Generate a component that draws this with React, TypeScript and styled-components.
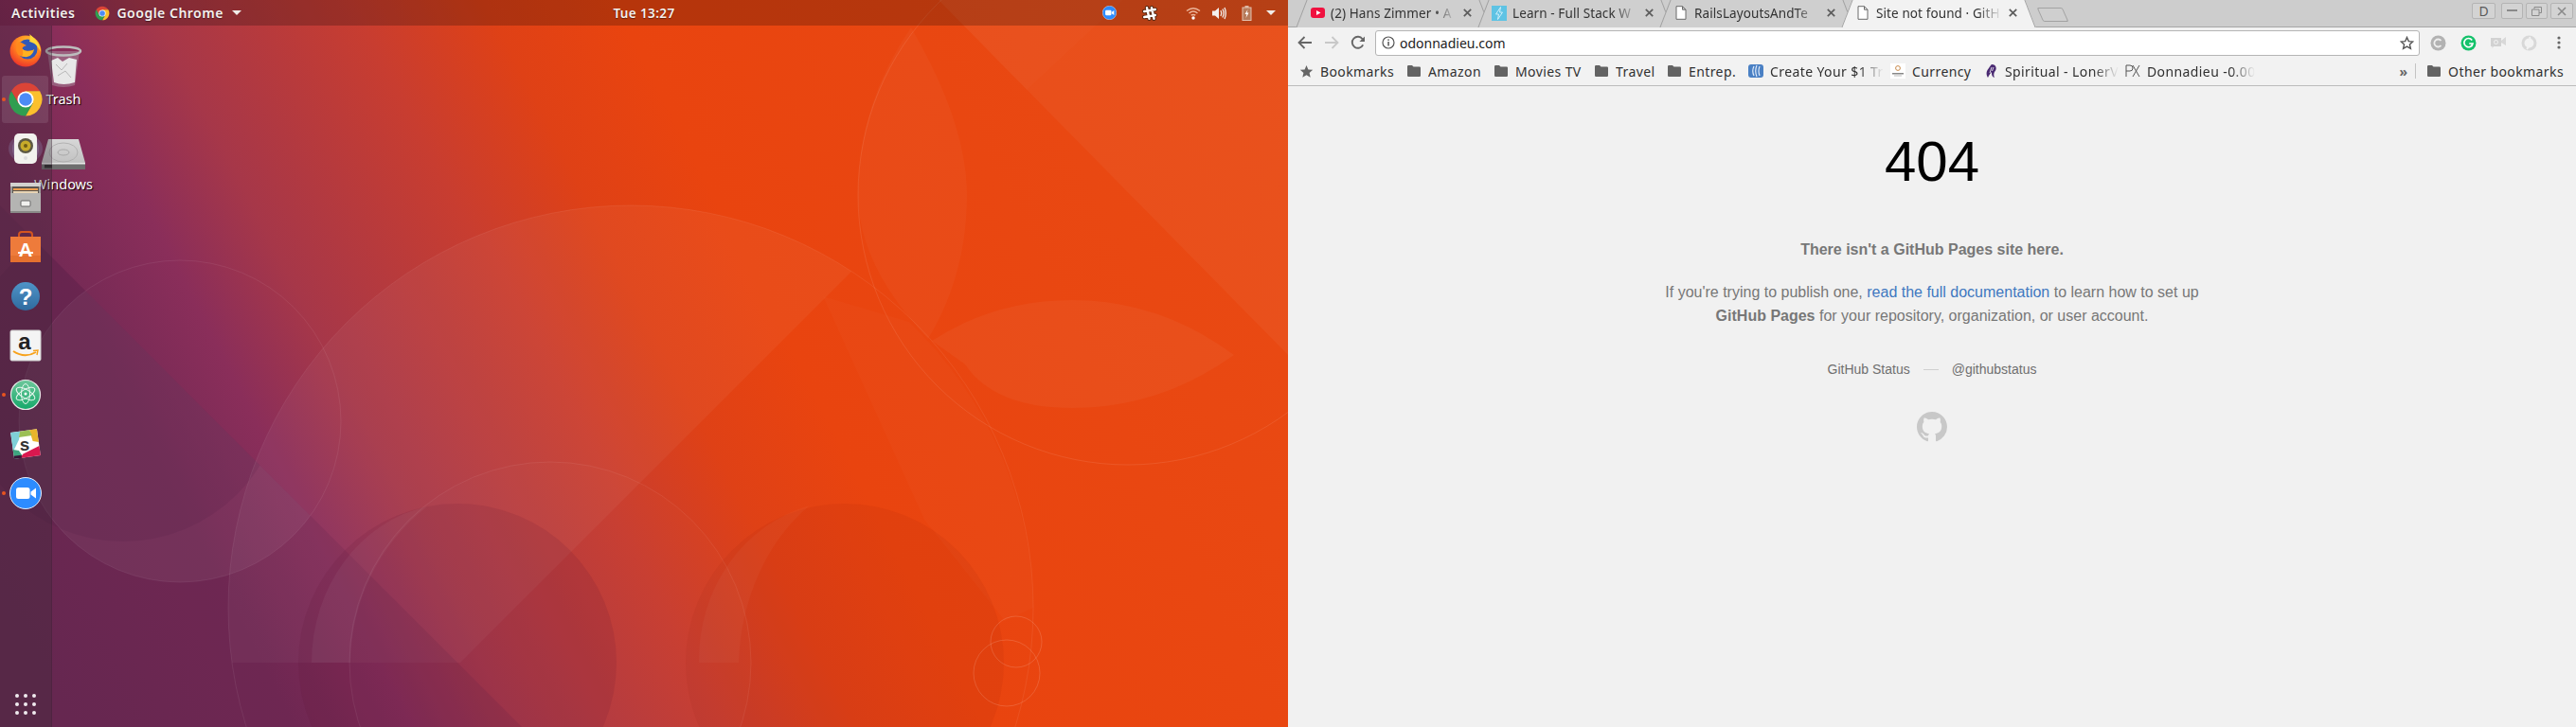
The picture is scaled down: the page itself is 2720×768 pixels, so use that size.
import React from "react";
import styled, { createGlobalStyle } from "styled-components";

const Global = createGlobalStyle`
  html, body { margin: 0; padding: 0; width: 2720px; height: 768px; overflow: hidden; background: #f1f1f1; }
  * { box-sizing: border-box; }
`;

const UI = `"Noto Sans", "Open Sans", sans-serif`;
const WEB = `"Liberation Sans", Arial, sans-serif`;
const FADE = `linear-gradient(90deg, #000 calc(100% - 26px), transparent 100%)`;

const Screen = styled.div`
  display: grid;
  grid-template-columns: 1360px 1360px;
  width: 2720px;
  height: 768px;
  overflow: hidden;
`;

/* ---------- desktop ---------- */
const Desktop = styled.section`
  position: relative;
  display: flex;
  flex-direction: column;
  height: 768px;
  overflow: hidden;
  background: #e9440f;
`;
const WallpaperSvg = styled.svg`
  position: absolute;
  inset: 0;
`;
const TopBar = styled.header`
  position: relative;
  display: grid;
  grid-template-columns: 1fr auto 1fr;
  align-items: center;
  height: 27px;
  flex: none;
  background: rgba(0, 0, 0, 0.22);
  color: #f4f0ee;
  font: 600 14px ${UI};
  letter-spacing: 0.5px;
  text-shadow: 0 1px 1px rgba(0, 0, 0, 0.45);
`;
const BarLeft = styled.div`
  display: flex;
  align-items: center;
  padding-left: 12px;
`;
const AppMenu = styled.div`
  display: flex;
  align-items: center;
  gap: 7px;
  margin-left: 21px;
`;
const Caret = styled.span`
  width: 0;
  height: 0;
  margin-left: 2px;
  border-left: 5px solid transparent;
  border-right: 5px solid transparent;
  border-top: 5px solid #f0ece8;
`;
const Clock = styled.div`
  font-size: 13.5px;
  letter-spacing: 0.4px;
`;
const Tray = styled.div`
  display: flex;
  align-items: center;
  justify-content: flex-end;
  padding-right: 14px;
`;
const TraySlot = styled.span<{ $w: number }>`
  display: flex;
  justify-content: center;
  align-items: center;
  width: ${(p) => p.$w}px;
`;
const Body = styled.div`
  position: relative;
  flex: 1;
  display: flex;
`;
const Dock = styled.nav`
  position: relative;
  z-index: 2;
  width: 55px;
  display: flex;
  flex-direction: column;
  background: rgba(52, 44, 52, 0.3);
  border-right: 1px solid rgba(60, 30, 50, 0.28);
`;
const DockSlot = styled.div<{ $active?: boolean; $running?: boolean }>`
  position: relative;
  display: flex;
  align-items: center;
  justify-content: center;
  height: 52px;
  flex: none;
  &::before {
    content: "";
    position: absolute;
    display: ${(p) => (p.$active ? "block" : "none")};
    left: 2px;
    right: 3px;
    top: 1px;
    bottom: 1px;
    border-radius: 3px;
    background: rgba(255, 255, 255, 0.1);
  }
  &::after {
    content: "";
    position: absolute;
    display: ${(p) => (p.$running ? "block" : "none")};
    left: 2px;
    top: 24px;
    width: 4px;
    height: 4px;
    border-radius: 50%;
    background: #e9541f;
  }
  svg { position: relative; }
`;
const AppGrid = styled.div`
  margin: auto 0 13px 16px;
  display: grid;
  grid-template-columns: repeat(3, 4px);
  gap: 5px;
`;
const AppDot = styled.i`
  width: 4px;
  height: 4px;
  border-radius: 50%;
  background: #f0eaee;
`;
const DesktopItem = styled.div<{ $top: number; $gap: number }>`
  position: absolute;
  left: 27px;
  top: ${(p) => p.$top}px;
  width: 80px;
  display: flex;
  flex-direction: column;
  align-items: center;
  gap: ${(p) => p.$gap}px;
  color: #fff;
  font: 400 14.5px ${UI};
  text-shadow: 1px 1px 1px #000;
  line-height: 19px;
  z-index: 1;
`;

/* ---------- browser ---------- */
const Browser = styled.section`
  display: flex;
  flex-direction: column;
  height: 768px;
  background: #f1f1f1;
  font: 400 14px ${UI};
  color: #2e2e2e;
`;
const TabStrip = styled.div`
  display: flex;
  height: 29px;
  flex: none;
  padding-left: 9px;
  background: #cdcdcd;
  border-bottom: 1px solid #a6a6a6;
`;
const Tab = styled.div<{ $active?: boolean }>`
  position: relative;
  isolation: isolate;
  display: flex;
  align-items: center;
  width: 205px;
  height: 29px;
  margin-right: -13px;
  padding: 0 18px 2px 14px;
  z-index: ${(p) => (p.$active ? 3 : 1)};
  &::before, &::after {
    content: "";
    position: absolute;
    top: 0;
    bottom: 0;
    width: 55%;
    z-index: -1;
    background: ${(p) => (p.$active ? "#f2f2f2" : "#cfcfcf")};
  }
  &::before {
    left: 5px;
    transform: skewX(-21deg);
    border-left: 1px solid #a0a0a0;
  }
  &::after {
    right: 6px;
    transform: skewX(21deg);
    border-right: 1px solid #a0a0a0;
  }
`;
const TabIcon = styled.span`
  display: flex;
  justify-content: center;
  width: 16px;
  flex: none;
  margin-right: 6px;
`;
const TabTitle = styled.span`
  flex: 1;
  overflow: hidden;
  white-space: nowrap;
  font-size: 13.5px;
  letter-spacing: 0.1px;
  -webkit-mask-image: ${FADE};
  mask-image: ${FADE};
  color: #333;
`;
const CloseMark = styled.span`
  display: flex;
  justify-content: center;
  width: 14px;
  flex: none;
  margin-left: 4px;
`;
const NewTab = styled.div`
  width: 27px;
  height: 15px;
  flex: none;
  margin: 8px 0 0 17px;
  transform: skewX(24deg);
  border: 1px solid #a2a2a2;
  border-radius: 2px;
  background: #cfcfcf;
`;
const WindowControls = styled.div`
  display: flex;
  align-items: flex-start;
  gap: 3px;
  margin-left: auto;
  padding: 3px 3px 0 0;
`;
const WinButton = styled.div<{ $w: number; $gap?: number }>`
  display: flex;
  align-items: center;
  justify-content: center;
  width: ${(p) => p.$w}px;
  height: 17px;
  margin-right: ${(p) => p.$gap ?? 0}px;
  border: 1px solid #b4b4b4;
  border-radius: 2px;
  background: #d3d3d3;
  color: #5a5a5a;
  font: 400 14px ${UI};
  line-height: 14px;
`;
const Toolbar = styled.div`
  display: flex;
  align-items: center;
  height: 32px;
  flex: none;
  padding: 0 2px 0 4px;
  background: #f2f2f2;
`;
const ToolButton = styled.span`
  display: flex;
  align-items: center;
  justify-content: center;
  width: 28px;
  height: 28px;
  flex: none;
`;
const Omnibox = styled.div`
  flex: 1;
  display: flex;
  align-items: center;
  height: 27px;
  margin: 0 3px 0 4px;
  padding: 0 5px 0 6px;
  background: #fff;
  border: 1px solid #b5b5b5;
  border-radius: 3px;
  font-size: 14px;
  color: #222;
`;
const Url = styled.span`
  flex: 1;
  margin-left: 5px;
`;
const ExtButton = styled.span`
  display: flex;
  align-items: center;
  justify-content: center;
  width: 32px;
  flex: none;
`;
const Bookmarks = styled.div`
  display: flex;
  align-items: center;
  height: 30px;
  flex: none;
  padding: 0 13px 1px 11px;
  background: #f2f2f2;
  border-bottom: 1px solid #bcbcbc;
  color: #303030;
`;
const Bookmark = styled.div<{ $w?: number }>`
  display: flex;
  align-items: center;
  width: ${(p) => (p.$w ? `${p.$w}px` : "auto")};
  flex: none;
  white-space: nowrap;
  overflow: hidden;
`;
const BookmarkIcon = styled.span`
  display: flex;
  justify-content: center;
  width: 16px;
  flex: none;
  margin-right: 7px;
`;
const BookmarkText = styled.span<{ $fade?: boolean }>`
  overflow: hidden;
  letter-spacing: 0.4px;
  ${(p) =>
    p.$fade
      ? `-webkit-mask-image: ${FADE};
         mask-image: ${FADE};`
      : ""}
`;
const Spacer = styled.div`
  flex: 1;
`;
const Chevron = styled.span`
  color: #666;
  font-size: 14px;
  font-weight: 700;
  margin-right: 8px;
`;
const Separator = styled.span`
  width: 1px;
  height: 16px;
  background: #c4c4c4;
  margin-right: 11px;
`;

/* ---------- 404 page ---------- */
const Page = styled.main`
  flex: 1;
  display: flex;
  flex-direction: column;
  align-items: center;
  background: #f1f1f1;
  font-family: ${WEB};
  color: #777;
  font-size: 16px;
`;
const BigCode = styled.h1`
  margin: 45px 0 0;
  height: 70px;
  font: 400 60px/70px ${WEB};
  color: #000;
`;
const Lead = styled.p`
  margin: 48px 0 0;
  font-weight: 700;
  line-height: 20px;
`;
const Copy = styled.p`
  margin: 22px 0 0;
  line-height: 25px;
  text-align: center;
`;
const DocLink = styled.a`
  color: #4078c0;
  text-decoration: none;
`;
const Strong = styled.strong`
  font-weight: 700;
`;
const FooterLinks = styled.div`
  display: flex;
  align-items: center;
  margin-top: 34px;
  font-size: 14px;
  line-height: 20px;
  color: #6f6f6f;
`;
const Dash = styled.span`
  width: 16px;
  height: 1px;
  margin: 0 14px;
  background: #cfcfcf;
`;
const Octo = styled.svg`
  margin-top: 35px;
`;

/* ---------- drawings ---------- */
const Wallpaper = () => (
  <WallpaperSvg width="1360" height="768" viewBox="0 0 1360 768">
    <defs>
      <linearGradient id="wall" gradientUnits="userSpaceOnUse" x1="-267" y1="137" x2="1077" y2="-552">
        <stop offset="0" stopColor="#6b2a53" />
        <stop offset="0.15" stopColor="#752a55" />
        <stop offset="0.223" stopColor="#8a2e5a" />
        <stop offset="0.29" stopColor="#a63749" />
        <stop offset="0.417" stopColor="#c83d30" />
        <stop offset="0.5" stopColor="#df4116" />
        <stop offset="0.58" stopColor="#e9440f" />
        <stop offset="1" stopColor="#e94b14" />
      </linearGradient>
      <clipPath id="bigTop"><rect x="0" y="0" width="1360" height="700" /></clipPath>
      <clipPath id="leftOfDiag"><polygon points="0,0 1186,0 418,768 0,768" /></clipPath>
      <clipPath id="belowLeft"><polygon points="0,217 551,768 0,768" /></clipPath>
    </defs>
    <rect width="1360" height="768" fill="url(#wall)" />
    {/* large top-right shapes */}
    <polygon points="991,0 1360,0 1360,375" fill="#fff" opacity="0.04" />
    <polygon points="991,0 1186,0 1084,95" fill="#fff" opacity="0.015" />
    <path d="M962 29 Q1021 130 1021 206 Q1021 290 980 358 Q906 280 906 206 Q906 110 962 29 Z" fill="#fff" opacity="0.03" />
    <path d="M984 360 Q1050 317 1132 317 Q1225 317 1303 375 Q1225 431 1132 431 Q1050 431 1019 385 Z" fill="#fff" opacity="0.04" />
    {/* big circle */}
    <g clipPath="url(#bigTop)">
      <g clipPath="url(#leftOfDiag)">
        <circle cx="666" cy="642" r="425" fill="#fff" opacity="0.045" />
      </g>
      <path d="M869 313 L976 549 L1061 656 L1091 642 A425 425 0 0 0 960 340 Z" fill="#fff" opacity="0.02" />
    </g>
    <polygon points="0,217 551,768 0,768" fill="#451a40" opacity="0.12" />
    {/* left circle crescent */}
    <g clipPath="url(#belowLeft)">
      <circle cx="190" cy="445" r="170" fill="#fff" opacity="0.05" />
      <circle cx="130" cy="402" r="170" fill="#3d1838" opacity="0.1" />
    </g>
    {/* bottom arches */}
    <circle cx="483" cy="700" r="168" fill="#5a1030" opacity="0.12" />
    <path d="M329 700 A152 168 0 0 1 451 535 A212 212 0 0 0 370 700 Z" fill="#fff" opacity="0.045" />
    <circle cx="892" cy="700" r="168" fill="#8a1a08" opacity="0.08" />
    <path d="M738 700 A155 168 0 0 1 855 534 A170 210 0 0 0 780 700 Z" fill="#fff" opacity="0.03" />
    <circle cx="581" cy="700" r="212" fill="#fff" opacity="0.01" />
    {/* hairlines */}
    <g fill="none" stroke="#fff" strokeOpacity="0.07" strokeWidth="1">
      <circle cx="666" cy="642" r="425" />
      <circle cx="1191" cy="206" r="285" strokeOpacity="0.09" />
      <circle cx="190" cy="445" r="170" />
      <circle cx="581" cy="700" r="212" />
      <circle cx="1073" cy="678" r="27" strokeOpacity="0.14" />
      <circle cx="1063" cy="711" r="35" strokeOpacity="0.14" />
    </g>
  </WallpaperSvg>
);

const ChromeIcon = ({ size }: { size: number }) => (
  <svg width={size} height={size} viewBox="0 0 24 24">
    <path d="M12 6.5H21.53A11 11 0 0 0 2.47 6.5L7.24 14.75 12 12Z" fill="#db4437" />
    <path d="M12 6.5H21.53A11 11 0 0 0 2.47 6.5L7.24 14.75 12 12Z" fill="#fbc02d" transform="rotate(120 12 12)" />
    <path d="M12 6.5H21.53A11 11 0 0 0 2.47 6.5L7.24 14.75 12 12Z" fill="#2f9e50" transform="rotate(240 12 12)" />
    <circle cx="12" cy="12" r="5.4" fill="#fff" />
    <circle cx="12" cy="12" r="4.3" fill="#4c8bf5" />
  </svg>
);

const FirefoxIcon = () => (
  <svg width="34" height="36" viewBox="0 0 34 36">
    <defs>
      <radialGradient id="ffa" cx="0.6" cy="0.25" r="0.85">
        <stop offset="0" stopColor="#ffcb2f" />
        <stop offset="0.55" stopColor="#ff7a1f" />
        <stop offset="1" stopColor="#e8232e" />
      </radialGradient>
    </defs>
    <circle cx="17" cy="19" r="16.5" fill="url(#ffa)" />
    <circle cx="19" cy="17" r="10.5" fill="#2f59b8" />
    <path d="M21 1 C28 6 33 12 33 20 C30 13 26 10 21 9 C22 6 22 3 21 1Z" fill="#ffd83a" />
    <path d="M10 9 C14 10 15 12 18 13 C15 14 13 15 14 17 C16 19 20 19 24 18 C23 23 17 27 11 24 C6 21 6 13 10 9Z" fill="#ff8a1c" />
    <path d="M14 17 C17 20 22 20 26 17 C25 24 18 27 13 24 C15 23 14 20 14 17Z" fill="#ffb21f" />
  </svg>
);

const SpeakerIcon = () => (
  <svg width="38" height="36" viewBox="0 0 38 36">
    <ellipse cx="19" cy="18" rx="18" ry="15" fill="#9fb6e8" opacity="0.2" />
    <ellipse cx="19" cy="18" rx="14" ry="15" fill="#b9c9ee" opacity="0.22" />
    <rect x="7" y="2" width="24" height="32" rx="5" fill="#f2f2ee" />
    <circle cx="19" cy="15" r="8" fill="#5c5844" />
    <circle cx="19" cy="15" r="5.5" fill="#c7ab2a" />
    <circle cx="19" cy="15" r="2" fill="#6e5c14" />
    <circle cx="19" cy="28" r="2" fill="#ddd" />
  </svg>
);

const FilesIcon = () => (
  <svg width="34" height="34" viewBox="0 0 34 34">
    <rect x="1" y="1" width="32" height="32" rx="2" fill="#9c9c9a" />
    <rect x="1" y="1" width="32" height="4" fill="#d2d2d0" />
    <rect x="3" y="5" width="28" height="7" fill="#5a5550" />
    <rect x="4" y="7" width="26" height="2" fill="#f0a050" />
    <rect x="4" y="10" width="26" height="2" fill="#e8d4b4" />
    <rect x="1" y="12" width="32" height="21" fill="#b4b4b2" />
    <rect x="1" y="31" width="32" height="2" fill="#8a8a88" />
    <rect x="12" y="20" width="10" height="6" rx="1" fill="#f0f0ee" stroke="#666" strokeWidth="1" />
  </svg>
);

const SoftwareIcon = () => (
  <svg width="34" height="36" viewBox="0 0 34 36">
    <path d="M10 9 V5 Q10 2 13 2 H21 Q24 2 24 5 V9" fill="none" stroke="#d4551f" strokeWidth="2" />
    <rect x="1" y="7" width="32" height="27" fill="#ee7b3b" />
    <rect x="1" y="27" width="32" height="7" fill="#e5712f" />
    <rect x="9" y="23" width="16" height="2" fill="#fff" />
    <text x="17" y="28" textAnchor="middle" fontFamily={WEB} fontWeight="700" fontSize="20" fill="#fff">A</text>
  </svg>
);

const HelpIcon = () => (
  <svg width="34" height="34" viewBox="0 0 34 34">
    <defs>
      <linearGradient id="hlp" x1="0" y1="0" x2="0" y2="1">
        <stop offset="0" stopColor="#4f94c8" />
        <stop offset="1" stopColor="#2f6a9e" />
      </linearGradient>
    </defs>
    <circle cx="17" cy="17" r="15" fill="url(#hlp)" />
    <text x="17" y="26" textAnchor="middle" fontFamily={WEB} fontWeight="700" fontSize="24" fill="#fff">?</text>
  </svg>
);

const AmazonIcon = () => (
  <svg width="34" height="34" viewBox="0 0 34 34">
    <rect x="1" y="1" width="32" height="32" rx="1.5" fill="#f4f4f4" stroke="#ccc" />
    <text x="16" y="21" textAnchor="middle" fontFamily={WEB} fontWeight="700" fontSize="24" fill="#222">a</text>
    <path d="M4 23 Q16 31 28 24" fill="none" stroke="#f7a21b" strokeWidth="2" />
    <path d="M25 22.5 L30 22 L29 27" fill="none" stroke="#f7a21b" strokeWidth="1.4" />
  </svg>
);

const AtomIcon = () => (
  <svg width="34" height="34" viewBox="0 0 34 34">
    <defs>
      <linearGradient id="atm" x1="0" y1="0" x2="0" y2="1">
        <stop offset="0" stopColor="#6ec79b" />
        <stop offset="1" stopColor="#14a86a" />
      </linearGradient>
    </defs>
    <circle cx="17" cy="17" r="15.5" fill="url(#atm)" stroke="#e8e8e8" strokeWidth="1.2" />
    <g fill="none" stroke="#e9f7ef" strokeWidth="1">
      <ellipse cx="17" cy="16" rx="11" ry="4.5" transform="rotate(30 17 16)" />
      <ellipse cx="17" cy="16" rx="11" ry="4.5" transform="rotate(-30 17 16)" />
      <ellipse cx="17" cy="16" rx="4.5" ry="10.5" />
    </g>
    <circle cx="17" cy="16" r="1.5" fill="#fff" />
  </svg>
);

const SlackIcon = () => (
  <svg width="32" height="32" viewBox="0 0 32 32">
    <g transform="rotate(-8 16 16)">
      <rect x="2" y="2" width="28" height="28" fill="#fff" />
      <polygon points="2,2 12,2 10,10 2,22" fill="#7fcfd8" />
      <polygon points="22,2 30,2 30,16 24,14" fill="#e9b52c" />
      <polygon points="12,2 22,2 24,8 10,8" fill="#9bbf55" />
      <polygon points="2,20 8,22 12,30 2,30" fill="#3ea57f" />
      <polygon points="12,26 30,20 30,30 8,30" fill="#d9184f" />
      <polygon points="2,27 10,27 10,30 2,30" fill="#3a1638" />
    </g>
    <text x="15" y="23" textAnchor="middle" fontFamily={WEB} fontWeight="700" fontSize="19" fill="#333">s</text>
  </svg>
);

const ZoomIcon = ({ size }: { size: number }) => (
  <svg width={size} height={size} viewBox="0 0 34 34">
    <circle cx="17" cy="17" r="16.5" fill="#2d8cff" stroke="#e8eef8" strokeWidth="1" />
    <rect x="7" y="11" width="14.5" height="12" rx="2.5" fill="#fff" />
    <path d="M22.5 15.5 L28 11.5 V22.5 L22.5 18.5Z" fill="#fff" />
  </svg>
);

const TrashIcon = () => (
  <svg width="40" height="46" viewBox="0 0 40 46">
    <path d="M3 6 L8 42 Q20 46 32 42 L37 6Z" fill="#b9b4ba" fillOpacity="0.38" />
    <ellipse cx="20" cy="6" rx="18" ry="4.5" fill="none" stroke="#bdbdbd" strokeWidth="2.5" />
    <path d="M7 16 L14 13 L19 17 L26 13 L34 15 L33 26 L32 39 Q20 43 10 39 Z" fill="#e8e8e8" />
    <path d="M12 20 L18 26 L24 19 M14 32 L22 27 L28 34" fill="none" stroke="#b8b8b8" strokeWidth="1" />
  </svg>
);

const DiskIcon = () => (
  <svg width="48" height="36" viewBox="0 0 48 36">
    <defs>
      <linearGradient id="dsk" x1="0" y1="0" x2="0" y2="1">
        <stop offset="0" stopColor="#d7d7d7" />
        <stop offset="1" stopColor="#c2c2c2" />
      </linearGradient>
    </defs>
    <path d="M8 1 H40 L47 26 H1 Z" fill="url(#dsk)" />
    <rect x="1" y="26" width="46" height="7" fill="#6e6e6e" />
    <rect x="1" y="26" width="46" height="1.5" fill="#e8e8e8" />
    <rect x="4" y="28" width="8" height="3.5" fill="#2c2c2c" />
    <ellipse cx="24" cy="15" rx="15" ry="10" fill="none" stroke="#aaa" strokeWidth="0.8" />
    <ellipse cx="24" cy="15" rx="6" ry="3" fill="none" stroke="#a0a0a0" strokeWidth="0.8" />
  </svg>
);

const TraySlack = () => (
  <svg width="16" height="16" viewBox="0 0 16 16">
    <g stroke="#3a2210" strokeWidth="4.4" strokeLinecap="round" opacity="0.75">
      <path d="M5 2.2 L7.5 13.8 M10 2.2 L12.5 13.8 M2.2 6 L13.8 4 M2.2 12 L13.8 10" />
    </g>
    <g stroke="#fff" strokeWidth="2.4" strokeLinecap="round">
      <path d="M5 2.2 L7.5 13.8 M10 2.2 L12.5 13.8 M2.2 6 L13.8 4 M2.2 12 L13.8 10" />
    </g>
  </svg>
);

const Wifi = () => (
  <svg width="16" height="14" viewBox="0 0 16 14">
    <g fill="none" stroke="#ecb59a" strokeWidth="1.5">
      <path d="M1 4.5 Q8 -1 15 4.5" />
      <path d="M3.5 7 Q8 3 12.5 7" />
      <path d="M5.7 9.2 Q8 7.6 10.3 9.2" />
    </g>
    <circle cx="8" cy="12" r="1.7" fill="#fff" />
  </svg>
);

const Volume = () => (
  <svg width="16" height="16" viewBox="0 0 16 16">
    <path d="M1 5.5 H4 L8 2 V14 L4 10.5 H1 Z" fill="#f4f0ee" />
    <g fill="none" stroke="#f4f0ee" strokeWidth="1.3">
      <path d="M10 5 Q11.5 8 10 11" />
      <path d="M12 3.5 Q14.2 8 12 12.5" />
      <path d="M14 2 Q16.6 8 14 14" />
    </g>
  </svg>
);

const Battery = () => (
  <svg width="11" height="16" viewBox="0 0 11 16">
    <rect x="3.5" y="0" width="4" height="2" fill="#ddb7a3" />
    <rect x="1" y="2" width="9" height="13.5" fill="#b77a5a" stroke="#e3c1af" strokeWidth="1" />
    <path d="M6.5 4 L3.5 9 H5.4 L4.5 13 L7.6 7.5 H5.7 Z" fill="#fff" />
  </svg>
);

const YouTube = () => (
  <svg width="15" height="11" viewBox="0 0 15 11">
    <rect width="15" height="11" rx="3" fill="#f0113f" />
    <path d="M6 3 L10.5 5.5 L6 8Z" fill="#fff" />
  </svg>
);
const Bolt = () => (
  <svg width="16" height="16" viewBox="0 0 16 16">
    <rect width="16" height="16" fill="#5fc3e4" />
    <path d="M9.5 1.5 L4.5 9 H7.5 L6.5 14.5 L11.5 7 H8.5 Z" fill="none" stroke="#d9f2fa" strokeWidth="0.9" />
  </svg>
);
const DocIcon = () => (
  <svg width="12" height="15" viewBox="0 0 12 15">
    <path d="M1 .7 H7.5 L11 4.2 V14.3 H1 Z M7.5 .7 V4.2 H11" fill="#fff" stroke="#6a6a6a" strokeWidth="1" />
  </svg>
);
const Close = () => (
  <svg width="9" height="9" viewBox="0 0 9 9">
    <path d="M.8 .8 L8.2 8.2 M8.2 .8 L.8 8.2" stroke="#5c5c5c" strokeWidth="1.7" />
  </svg>
);
const Back = ({ color }: { color: string }) => (
  <svg width="16" height="14" viewBox="0 0 16 14">
    <path d="M15 7 H2 M7.5 1 L1.5 7 L7.5 13" fill="none" stroke={color} strokeWidth="1.8" />
  </svg>
);
const Forward = ({ color }: { color: string }) => (
  <svg width="16" height="14" viewBox="0 0 16 14">
    <path d="M1 7 H14 M8.5 1 L14.5 7 L8.5 13" fill="none" stroke={color} strokeWidth="1.8" />
  </svg>
);
const Reload = () => (
  <svg width="16" height="16" viewBox="0 0 16 16">
    <path d="M13.2 10.4 A6 6 0 1 1 12.6 4.2" fill="none" stroke="#666" strokeWidth="1.9" />
    <path d="M15 1.4 V7 H9.4 Z" fill="#666" />
  </svg>
);
const Info = () => (
  <svg width="14" height="14" viewBox="0 0 14 14">
    <circle cx="7" cy="7" r="6" fill="none" stroke="#555" strokeWidth="1.2" />
    <rect x="6.3" y="6" width="1.5" height="4.5" fill="#555" />
    <rect x="6.3" y="3.4" width="1.5" height="1.5" fill="#555" />
  </svg>
);
const StarOutline = () => (
  <svg width="15" height="15" viewBox="0 0 15 15">
    <path d="M7.5 1.5 L9.3 5.6 L13.8 6 L10.4 9 L11.4 13.4 L7.5 11.1 L3.6 13.4 L4.6 9 L1.2 6 L5.7 5.6 Z" fill="none" stroke="#555" strokeWidth="1.4" />
  </svg>
);
const StarFill = () => (
  <svg width="15" height="15" viewBox="0 0 15 15">
    <path d="M7.5 1 L9.4 5.4 L14.2 5.8 L10.6 9 L11.7 13.8 L7.5 11.3 L3.3 13.8 L4.4 9 L.8 5.8 L5.6 5.4 Z" fill="#666" />
  </svg>
);
const Folder = () => (
  <svg width="14" height="12" viewBox="0 0 14 12">
    <path d="M0 1.2 Q0 0 1.2 0 H5 L6.5 1.6 H12.8 Q14 1.6 14 2.8 V10.8 Q14 12 12.8 12 H1.2 Q0 12 0 10.8 Z" fill="#636363" />
  </svg>
);
const RingIcon = () => (
  <svg width="16" height="16" viewBox="0 0 16 16">
    <rect x="0" y="1" width="16" height="14" rx="3" fill="#4a80c4" />
    <g fill="none" stroke="#dfeafa" strokeWidth="1.2">
      <path d="M6 3 Q3.5 8 6 13" />
      <path d="M9 2 Q6.5 8 9 14" />
      <path d="M12 3 Q10 8 12 13" />
    </g>
  </svg>
);
const CurrencyIcon = () => (
  <svg width="16" height="16" viewBox="0 0 16 16">
    <rect width="16" height="16" fill="#fff" />
    <circle cx="8" cy="5" r="2.4" fill="none" stroke="#c98a4a" strokeWidth="1" />
    <rect x="2" y="10" width="12" height="1.5" fill="#888" />
    <rect x="4" y="12.5" width="8" height="1" fill="#bbb" />
  </svg>
);
const SpiritIcon = () => (
  <svg width="16" height="16" viewBox="0 0 16 16">
    <path d="M9 1 C14 1 15 6 12 9 C11 11 11 13 12 15 C9 14 9 11 9 9 C7 11 6 13 5 15 C3 12 3 8 6 5 C7 3 8 2 9 1Z" fill="#4a2a72" />
    <path d="M9 4 L7 10 M11 4 L9.5 8" stroke="#fff" strokeWidth="0.8" />
  </svg>
);
const PxIcon = () => (
  <svg width="16" height="16" viewBox="0 0 16 16">
    <path d="M1 14 V2 H5 Q8 2 8 5 Q8 8 5 8 H1 M8 2 L15 14 M15 2 L8 14" fill="none" stroke="#555" strokeWidth="1" />
  </svg>
);
const GreyC = () => (
  <svg width="17" height="17" viewBox="0 0 17 17">
    <circle cx="8.5" cy="8.5" r="8" fill="#b2b2b2" />
    <path d="M11.5 6 A4 4 0 1 0 11.5 11" fill="none" stroke="#eee" strokeWidth="1.8" />
  </svg>
);
const Grammarly = () => (
  <svg width="17" height="17" viewBox="0 0 17 17">
    <circle cx="8.5" cy="8.5" r="8" fill="#15c26b" />
    <path d="M12.2 5.4 A4.6 4.6 0 1 0 13 9 H9.2" fill="none" stroke="#fff" strokeWidth="1.7" />
  </svg>
);
const GreyChat = () => (
  <svg width="17" height="14" viewBox="0 0 17 14">
    <path d="M0 2 H11 V11 H3 L1.5 13 V11 H0Z" fill="#d2d2d2" />
    <path d="M11 5 L16 1 V10 L11 7Z" fill="#d8d8d8" />
    <circle cx="5.5" cy="6.5" r="2" fill="none" stroke="#f4f4f4" strokeWidth="1" />
  </svg>
);
const GreySwirl = () => (
  <svg width="17" height="17" viewBox="0 0 17 17">
    <circle cx="8.5" cy="8.5" r="6.5" fill="none" stroke="#d8d8d8" strokeWidth="3" />
    <path d="M6 15 Q12 9 9 2" fill="none" stroke="#f2f2f2" strokeWidth="1.8" />
  </svg>
);
const MenuDots = () => (
  <svg width="4" height="14" viewBox="0 0 4 14">
    <circle cx="2" cy="2" r="1.6" fill="#666" />
    <circle cx="2" cy="7" r="1.6" fill="#666" />
    <circle cx="2" cy="12" r="1.6" fill="#666" />
  </svg>
);
const OctoPath =
  "M8 0C3.58 0 0 3.58 0 8c0 3.54 2.29 6.53 5.47 7.59.4.07.55-.17.55-.38 0-.19-.01-.82-.01-1.49-2.01.37-2.53-.49-2.69-.94-.09-.23-.48-.94-.82-1.13-.28-.15-.68-.52-.01-.53.63-.01 1.08.58 1.23.82.72 1.21 1.87.87 2.33.66.07-.52.28-.87.51-1.07-1.78-.2-3.64-.89-3.64-3.95 0-.87.31-1.59.82-2.15-.08-.2-.36-1.02.08-2.12 0 0 .67-.21 2.2.82.64-.18 1.32-.27 2-.27.68 0 1.36.09 2 .27 1.53-1.04 2.2-.82 2.2-.82.44 1.1.16 1.92.08 2.12.51.56.82 1.27.82 2.15 0 3.07-1.87 3.75-3.65 3.95.29.25.54.73.54 1.48 0 1.07-.01 1.93-.01 2.2 0 .21.15.46.55.38A8.013 8.013 0 0016 8c0-4.42-3.58-8-8-8z";

const tabs = [
  { icon: <YouTube />, title: "(2) Hans Zimmer • A" },
  { icon: <Bolt />, title: "Learn - Full Stack W" },
  { icon: <DocIcon />, title: "RailsLayoutsAndTe" },
  { icon: <DocIcon />, title: "Site not found · GitH", active: true },
];

const marks = [
  { icon: <Folder />, label: "Amazon", w: 92 },
  { icon: <Folder />, label: "Movies TV", w: 106 },
  { icon: <Folder />, label: "Travel", w: 77 },
  { icon: <Folder />, label: "Entrep.", w: 86 },
  { icon: <RingIcon />, label: "Create Your $1 Tr", w: 150, fade: true },
  { icon: <CurrencyIcon />, label: "Currency", w: 98 },
  { icon: <SpiritIcon />, label: "Spiritual - LonerV", w: 150, fade: true },
  { icon: <PxIcon />, label: "Donnadieu -0.00", w: 137, fade: true },
];

export default function App() {
  return (
    <>
      <Global />
      <Screen>
        <Desktop>
          <Wallpaper />
          <TopBar>
            <BarLeft>
              Activities
              <AppMenu>
                <ChromeIcon size={16} />
                Google Chrome
                <Caret />
              </AppMenu>
            </BarLeft>
            <Clock>Tue 13:27</Clock>
            <Tray>
              <TraySlot $w={30}><ZoomIcon size={15} /></TraySlot>
              <TraySlot $w={56}><TraySlack /></TraySlot>
              <TraySlot $w={36}><Wifi /></TraySlot>
              <TraySlot $w={18}><Volume /></TraySlot>
              <TraySlot $w={40}><Battery /></TraySlot>
              <TraySlot $w={10}><Caret /></TraySlot>
            </Tray>
          </TopBar>
          <Body>
            <DesktopItem $top={21} $gap={1}>
              <TrashIcon />
              <span>Trash</span>
            </DesktopItem>
            <DesktopItem $top={119} $gap={3}>
              <DiskIcon />
              <span>Windows</span>
            </DesktopItem>
            <Dock>
              <DockSlot><FirefoxIcon /></DockSlot>
              <DockSlot $active $running><ChromeIcon size={38} /></DockSlot>
              <DockSlot><SpeakerIcon /></DockSlot>
              <DockSlot><FilesIcon /></DockSlot>
              <DockSlot><SoftwareIcon /></DockSlot>
              <DockSlot><HelpIcon /></DockSlot>
              <DockSlot><AmazonIcon /></DockSlot>
              <DockSlot $running><AtomIcon /></DockSlot>
              <DockSlot><SlackIcon /></DockSlot>
              <DockSlot $running><ZoomIcon size={34} /></DockSlot>
              <AppGrid>
                {Array.from({ length: 9 }).map((_, i) => (
                  <AppDot key={i} />
                ))}
              </AppGrid>
            </Dock>
          </Body>
        </Desktop>

        <Browser>
          <TabStrip>
            {tabs.map((t) => (
              <Tab key={t.title} $active={t.active}>
                <TabIcon>{t.icon}</TabIcon>
                <TabTitle>{t.title}</TabTitle>
                <CloseMark><Close /></CloseMark>
              </Tab>
            ))}
            <NewTab />
            <WindowControls>
              <WinButton $w={25} $gap={3}>D</WinButton>
              <WinButton $w={23}>
                <svg width="11" height="3" viewBox="0 0 11 3"><rect width="11" height="2" fill="#8a8a8a" /></svg>
              </WinButton>
              <WinButton $w={23}>
                <svg width="11" height="10" viewBox="0 0 11 10">
                  <path d="M3 2.5 V.5 H10.5 V6.5 H8 M.5 3 H8 V9.5 H.5Z" fill="none" stroke="#8a8a8a" />
                </svg>
              </WinButton>
              <WinButton $w={24}>
                <svg width="10" height="10" viewBox="0 0 10 10">
                  <path d="M1 1 L9 9 M9 1 L1 9" stroke="#8a8a8a" strokeWidth="1.6" />
                </svg>
              </WinButton>
            </WindowControls>
          </TabStrip>
          <Toolbar>
            <ToolButton><Back color="#666" /></ToolButton>
            <ToolButton><Forward color="#c8c8c8" /></ToolButton>
            <ToolButton><Reload /></ToolButton>
            <Omnibox>
              <Info />
              <Url>odonnadieu.com</Url>
              <StarOutline />
            </Omnibox>
            <ExtButton><GreyC /></ExtButton>
            <ExtButton><Grammarly /></ExtButton>
            <ExtButton><GreyChat /></ExtButton>
            <ExtButton><GreySwirl /></ExtButton>
            <ExtButton><MenuDots /></ExtButton>
          </Toolbar>
          <Bookmarks>
            <Bookmark $w={114}>
              <BookmarkIcon><StarFill /></BookmarkIcon>
              <BookmarkText>Bookmarks</BookmarkText>
            </Bookmark>
            {marks.map((m) => (
              <Bookmark key={m.label} $w={m.w}>
                <BookmarkIcon>{m.icon}</BookmarkIcon>
                <BookmarkText $fade={m.fade}>{m.label}</BookmarkText>
              </Bookmark>
            ))}
            <Spacer />
            <Chevron>»</Chevron>
            <Separator />
            <Bookmark>
              <BookmarkIcon><Folder /></BookmarkIcon>
              <BookmarkText>Other bookmarks</BookmarkText>
            </Bookmark>
          </Bookmarks>
          <Page>
            <BigCode>404</BigCode>
            <Lead>There isn't a GitHub Pages site here.</Lead>
            <Copy>
              If you're trying to publish one, <DocLink>read the full documentation</DocLink> to learn how to set up
              <br />
              <Strong>GitHub Pages</Strong> for your repository, organization, or user account.
            </Copy>
            <FooterLinks>
              <span>GitHub Status</span>
              <Dash />
              <span>@githubstatus</span>
            </FooterLinks>
            <Octo width="32" height="32" viewBox="0 0 16 16">
              <path d={OctoPath} fill="#c8c8c8" />
            </Octo>
          </Page>
        </Browser>
      </Screen>
    </>
  );
}
